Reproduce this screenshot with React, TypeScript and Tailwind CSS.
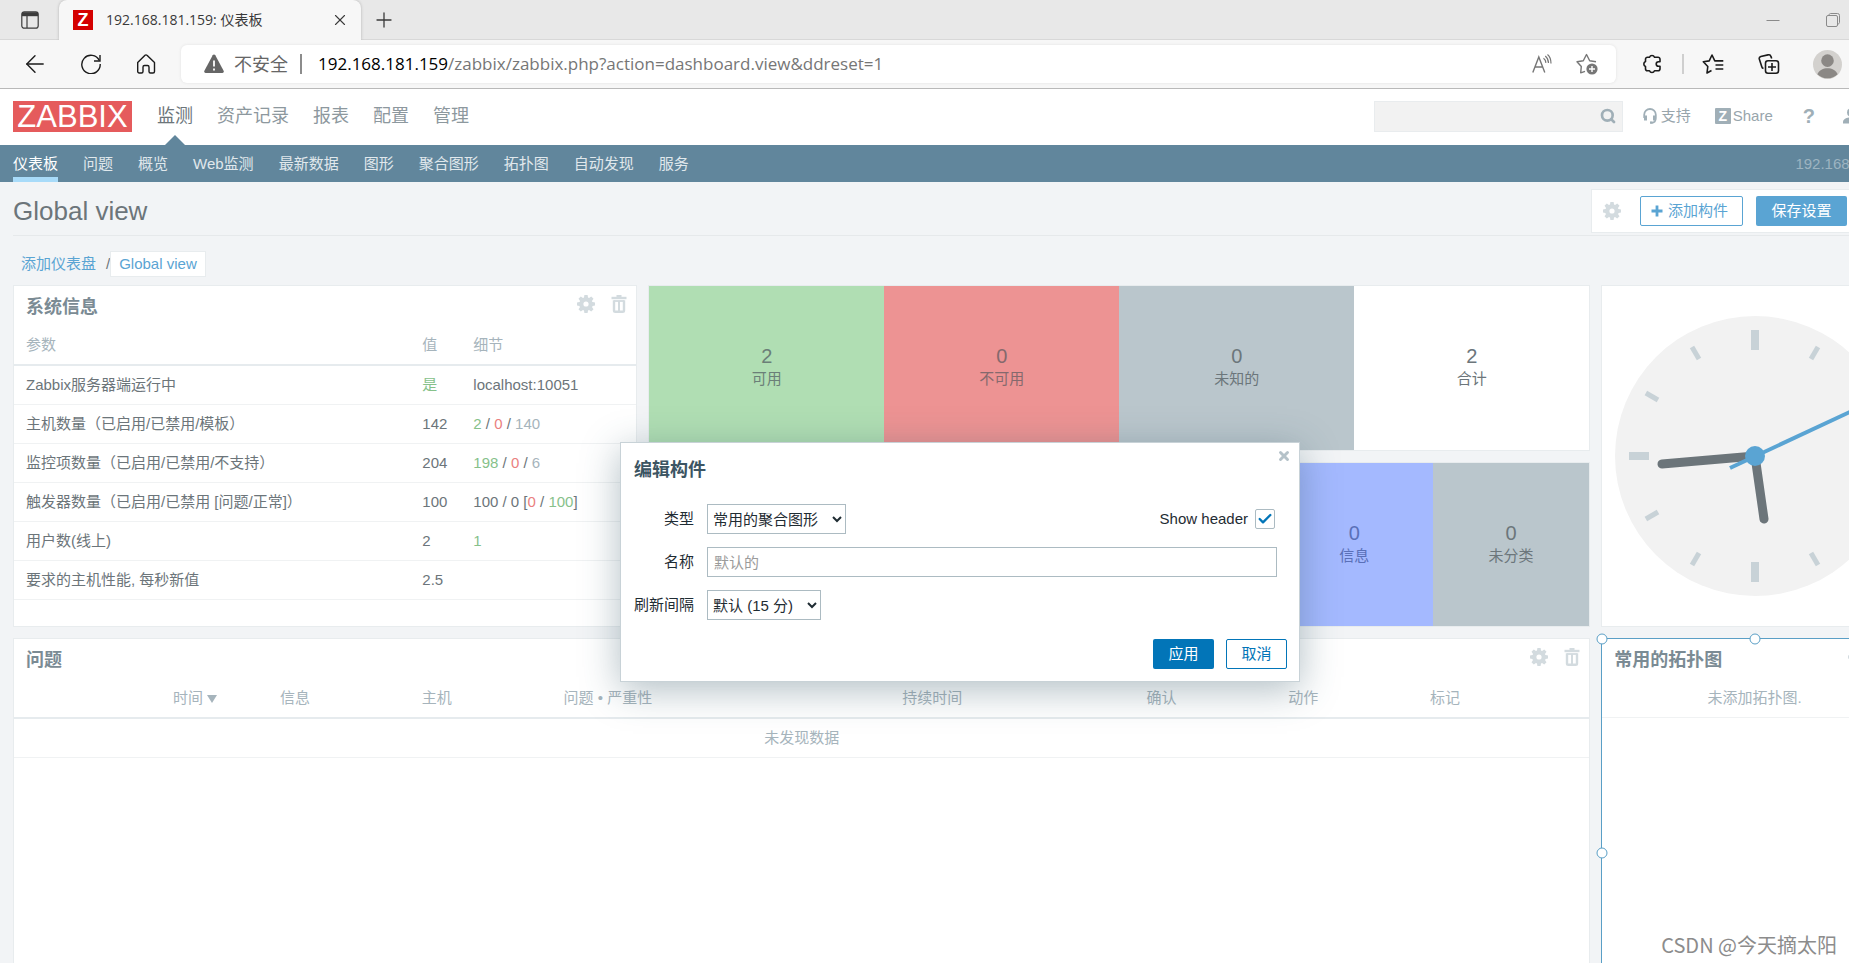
import type { ReactNode } from "react"
import { ArrowLeft, Check, Plus, Search, X } from "lucide-react"

const mainMenu = ["监测", "资产记录", "报表", "配置", "管理"]
const subMenu = ["仪表板", "问题", "概览", "Web监测", "最新数据", "图形", "聚合图形", "拓扑图", "自动发现", "服务"]

const green = "text-[#86c18a]"
const red = "text-[#ea7f80]"
const gray = "text-[#a6b4bc]"

const systemInfo: { name: string; value: string; valueClass?: string; details: ReactNode }[] = [
  { name: "Zabbix服务器端运行中", value: "是", valueClass: green, details: "localhost:10051" },
  {
    name: "主机数量（已启用/已禁用/模板）",
    value: "142",
    details: (
      <>
        <span className={green}>2</span> / <span className={red}>0</span> / <span className={gray}>140</span>
      </>
    ),
  },
  {
    name: "监控项数量（已启用/已禁用/不支持）",
    value: "204",
    details: (
      <>
        <span className={green}>198</span> / <span className={red}>0</span> / <span className={gray}>6</span>
      </>
    ),
  },
  {
    name: "触发器数量（已启用/已禁用 [问题/正常]）",
    value: "100",
    details: (
      <>
        100 / 0 [<span className={red}>0</span> / <span className={green}>100</span>]
      </>
    ),
  },
  { name: "用户数(线上)", value: "2", details: <span className={green}>1</span> },
  { name: "要求的主机性能, 每秒新值", value: "2.5", details: "" },
]

const hostTiles = [
  { count: 2, label: "可用", className: "bg-[#b0deb3] text-[#6b7f78]" },
  { count: 0, label: "不可用", className: "bg-[#ed9393] text-[#85696d]" },
  { count: 0, label: "未知的", className: "bg-[#bac6cc] text-[#6c767b]" },
  { count: 2, label: "合计", className: "bg-white text-[#6c767b]" },
]

const severityTiles = [
  { count: 0, label: "信息", className: "col-start-5 bg-[#a4b9ff] text-[#5a70b8]" },
  { count: 0, label: "未分类", className: "bg-[#bac6cc] text-[#6c767b]" },
]

function GearIcon() {
  return (
    <svg viewBox="-9 -9 18 18" className="size-[18px]" fill="#d3dbdf">
      <circle r="4.7" fill="none" stroke="#d3dbdf" strokeWidth="4.2" />
      {[0, 45, 90, 135, 180, 225, 270, 315].map((a) => (
        <path key={a} d="M-2.2-5.5-1.6-9H1.6L2.2-5.5Z" transform={`rotate(${a})`} />
      ))}
    </svg>
  )
}

function TrashIcon() {
  return (
    <svg viewBox="0 0 16 18" className="h-[18px] w-4" fill="none" stroke="#d3dbdf">
      <path d="M.5 3h15" strokeWidth="2.4" />
      <path d="M5.5 1h5" strokeWidth="2" />
      <path d="M3 5.2v10.3a1.3 1.3 0 0 0 1.3 1.3h7.4a1.3 1.3 0 0 0 1.3-1.3V5.2" strokeWidth="2.4" />
      <path d="M3 6h10" strokeWidth="1.8" />
      <path d="M8 6v11" strokeWidth="2" />
    </svg>
  )
}

function Widget({ title, children }: { title: string; children: ReactNode }) {
  return (
    <>
      <div className="flex h-[39px] items-center pt-[2px] pr-[9px] pl-3">
        <h4 className="text-lg font-bold text-[#7b8b94]">{title}</h4>
        <div className="ml-auto flex items-center gap-4 pb-[6px]">
          <button aria-label="编辑">
            <GearIcon />
          </button>
          <button aria-label="删除">
            <TrashIcon />
          </button>
        </div>
      </div>
      {children}
    </>
  )
}

function Tile({ count, label, className }: { count: number; label: string; className: string }) {
  return (
    <div className={`flex flex-col items-center justify-center pb-[2px] ${className}`}>
      <span className="text-xl leading-6">{count}</span>
      <span className="leading-[22px]">{label}</span>
    </div>
  )
}

function Clock() {
  return (
    <svg viewBox="-140 -140 280 280" className="size-[280px]">
      <circle r="140" fill="#f2f2f2" />
      {Array.from({ length: 12 }, (_, i) =>
        i % 3 === 0 ? (
          <rect key={i} x="-4" y="-126" width="8" height="20" fill="#c8d2d7" transform={`rotate(${i * 30})`} />
        ) : (
          <rect key={i} x="-2.5" y="-126" width="5" height="14" fill="#c8d2d7" transform={`rotate(${i * 30})`} />
        ),
      )}
      <g stroke="#6c757a" strokeWidth="9" strokeLinecap="round">
        <path d="M0 0 9 63" />
        <path d="M0 0-93 8" />
      </g>
      <path d="M-25 12 112-52" stroke="#5aa4d3" strokeWidth="4" />
      <circle r="10" fill="#5aa4d3" />
    </svg>
  )
}

function BrowserChrome() {
  return (
    <header className="font-['Open_Sans','Noto_Sans_CJK_SC',sans-serif]">
      {/* Tab strip */}
      <div className="flex h-10 items-center bg-[#e8e8e8] shadow-[inset_0_-1px_0_#d8d8d8]">
        <button aria-label="标签操作" className="ml-[21px]">
          <svg viewBox="0 0 18 18" className="size-[18px]" fill="none" stroke="#3c3c3c" strokeWidth="1.2">
            <rect x=".8" y=".8" width="16.4" height="16.4" rx="2.5" />
            <path d="M1 3.2h16" strokeWidth="4" />
            <path d="M6 5v12" />
          </svg>
        </button>
        <div className="ml-5 flex h-10 w-[302px] items-center rounded-t-lg bg-[#f7f7f7] pr-3 pl-[14px] shadow-[0_0_3px_#b0b0b0] [clip-path:inset(-3px_-3px_0_-3px)]">
          <span className="grid size-5 place-items-center bg-[#d40000] font-['Liberation_Sans'] text-lg leading-5 font-bold text-white">
            Z
          </span>
          <span className="ml-[13px] text-sm text-[#3a3a3a]">192.168.181.159: 仪表板</span>
          <button aria-label="关闭标签" className="ml-auto">
            <X className="size-[18px] text-[#3a3a3a]" strokeWidth={1.5} />
          </button>
        </div>
        <button aria-label="新建标签" className="ml-[11px]">
          <Plus className="size-6 text-[#3a3a3a]" strokeWidth={1.3} />
        </button>
        <div className="mr-[80px] ml-auto flex items-center gap-[46px]">
          <button aria-label="最小化">
            <svg viewBox="0 0 14 14" className="size-[14px]" stroke="#8a8a8a">
              <path d="M.5 7.5h13" />
            </svg>
          </button>
          <button aria-label="还原">
            <svg viewBox="0 0 14 14" className="size-[14px]" fill="none" stroke="#8a8a8a">
              <rect x=".5" y="2.5" width="11" height="11" rx="1.5" />
              <path d="M3 2.2c0-1 .6-1.7 1.6-1.7h6.9a2 2 0 0 1 2 2v6.9c0 1-.6 1.6-1.7 1.6" />
            </svg>
          </button>
        </div>
      </div>

      {/* Address bar */}
      <div className="flex h-[49px] items-center border-b border-[#b9b9b9] bg-[#f7f7f7] pl-[25px]">
        <div className="flex items-center gap-9">
          <button aria-label="后退">
            <ArrowLeft className="size-5 scale-140 text-[#1b1b1b]" strokeWidth={1.2} />
          </button>
          <button aria-label="刷新">
            <svg viewBox="0 0 20 20" className="size-5" fill="none" stroke="#1b1b1b" strokeWidth="1.4">
              <path d="M18.3 6.5A9.2 9.2 0 1 0 19.2 10" />
              <path d="M19 1v6h-6" />
            </svg>
          </button>
          <button aria-label="主页">
            <svg viewBox="0 0 20 20" className="size-5" fill="none" stroke="#1b1b1b" strokeWidth="1.4" strokeLinejoin="round">
              <path d="M.7 8.5 8 1.3a1.4 1.4 0 0 1 2 0l7.500 7.200V17.500a1.500 1.500 0 0 1-1.500 1.500h-2.500a1.500 1.500 0 0 1-1.500-1.500V13a1.500 1.500 0 0 0-1.500-1.500h-3A1.500 1.500 0 0 0 6 13v4.500A1.500 1.500 0 0 1 4.500 19H2.200a1.500 1.500 0 0 1-1.500-1.500Z" />
            </svg>
          </button>
        </div>
        <div className="ml-6 flex h-[38px] flex-1 items-center rounded-md bg-white pr-[18px] pl-[23px] shadow-[0_0_3px_#e0e0e0]">
          <svg viewBox="0 0 20 20" className="size-5">
            <path d="M8.7 1.3a1.5 1.5 0 0 1 2.6 0l8.3 15.5A1.5 1.5 0 0 1 18.3 19H1.7A1.5 1.5 0 0 1 .4 16.8Z" fill="#666" />
            <path d="M10 6.500v6M10 14.500v2" stroke="#fff" strokeWidth="1.800" />
          </svg>
          <span className="ml-[10px] text-lg text-[#666]">不安全</span>
          <span className="ml-3 h-5 w-[2px] bg-[#8c8c8c]" />
          <span className="ml-4 text-[17px] text-[#767676]">
            <span className="text-black">192.168.181.159</span>/zabbix/zabbix.php?action=dashboard.view&amp;ddreset=1
          </span>
          <button aria-label="朗读" className="ml-auto">
            <svg viewBox="0 0 20 20" className="size-5" fill="none" stroke="#767676" strokeWidth="1.4">
              <path d="M.8 18.500 6.800 3l6 15.500M3 13h7.700" />
              <path d="M11.500 4.300c1.500 1 2.300 2.700 2.400 4.600M13.300 2c2 1.600 3 4 3.200 7M15.500.5c2.400 2 3.500 5 3.500 9" strokeWidth="1.200" />
            </svg>
          </button>
          <button aria-label="收藏此页" className="ml-6">
            <svg viewBox="0 0 22 22" className="size-[22px]" fill="none" stroke="#767676" strokeWidth="1.4" strokeLinejoin="round">
              <path d="M9 18.300 4.700 19.800 5.300 13.500 1 8.700l6.300-1L10.500 1.500l3.200 6.200 6.300 1" />
              <circle cx="16" cy="16" r="5.600" fill="#767676" stroke="none" />
              <path d="M16 13v6M13 16h6" stroke="#fff" />
            </svg>
          </button>
        </div>
        <div className="flex items-center pr-[78px] text-[#1b1b1b]">
          <button aria-label="扩展" className="ml-[26px]">
            <svg viewBox="0 0 20 20" className="size-5" fill="none" stroke="currentColor" strokeWidth="1.6" strokeLinejoin="round">
              <path d="M5.500 3.200H7.500a2.700 2.700 0 0 1 5 0h3.500a2 2 0 0 1 2 2v2.500h-1.500a2.300 2.300 0 0 0 0 4.600h1.500v2.500a2 2 0 0 1-2 2h-3.500a2.700 2.700 0 0 1-5 0h-2a2 2 0 0 1-2-2v-2.300a2.700 2.700 0 0 1 0-5V5.200a2 2 0 0 1 2-2Z" />
            </svg>
          </button>
          <span className="ml-5 h-5 w-[2px] bg-[#cfcfcf]" />
          <button aria-label="收藏夹" className="ml-[18px]">
            <svg viewBox="0 0 22 20" className="h-5 w-[22px]" fill="none" stroke="currentColor" strokeWidth="1.6" strokeLinejoin="round">
              <path d="M9.500 16.500 5 19l.8-6.500L1.300 7.800l5.900-.9L10 1l2.800 5.900h8.500M13.500 11h7.800M13.500 15h7.800" />
            </svg>
          </button>
          <button aria-label="集锦" className="ml-[34px]">
            <svg viewBox="0 0 22 20" className="h-5 w-[22px]" fill="none" stroke="currentColor" strokeWidth="1.6">
              <path d="M5.500 14.500c-1-.3-1.600-1-1.800-2L1.300 5c-.3-1.300.3-2.200 1.500-2.600L10 .9c1.400-.3 2.500.2 2.900 1.500l.8 2.100" />
              <rect x="7.500" y="6.700" width="13" height="12.500" rx="2.500" />
              <path d="M14 9v8M10 13h8" />
            </svg>
          </button>
          <button aria-label="个人资料" className="ml-[33px]">
            <svg viewBox="0 0 30 30" className="size-[29px]">
              <circle cx="15" cy="15" r="15" fill="#d3d1ce" />
              <circle cx="15" cy="11" r="6.500" fill="#8b8885" />
              <path d="M4.500 25c2-4 6-6 10.500-6s8.500 2 10.500 6a15 15 0 0 1-21 0Z" fill="#8b8885" />
            </svg>
          </button>
        </div>
      </div>
    </header>
  )
}

function ZabbixHeader() {
  return (
    <div>
      <div className="flex h-14 items-center bg-white pl-[13px]">
        <a href="#" className="mb-[2px] flex h-[31px] w-[119px] items-center justify-center bg-[#e55b5c] text-[31px] leading-[31px] text-white">
          ZABBIX
        </a>
        <nav className="ml-[25px] flex h-full gap-6 text-lg text-[#8d989e]">
          {mainMenu.map((item, i) => (
            <a
              key={item}
              href="#"
              className={`relative flex items-center pb-[2px] ${i === 0 ? "text-[#6c757a]" : ""}`}
            >
              {item}
              {i === 0 && (
                <svg viewBox="0 0 20 10" className="absolute bottom-0 left-1/2 h-[10px] w-5 -translate-x-1/2" fill="#61869c">
                  <path d="M0 10 10 0l10 10Z" />
                </svg>
              )}
            </a>
          ))}
        </nav>
        <div className="mr-[61px] mb-[2px] ml-auto flex items-center text-[#98a5ac]">
          <div className="flex h-[31px] w-[249px] items-center border border-[#e9ecee] bg-[#f2f2f2] pr-[6px]">
            <input type="text" aria-label="搜索" className="min-w-0 flex-1 px-1 outline-none" />
            <button aria-label="搜索">
              <Search className="size-4 text-[#a0afb7]" strokeWidth={4} />
            </button>
          </div>
          <a href="#" className="ml-5 flex items-center gap-1">
            <svg viewBox="0 0 14 16" className="h-4 w-[14px]" fill="none" stroke="#a0afb7">
              <path d="M1.200 10V6.800a5.800 5.800 0 0 1 11.600 0V10c0 3-1.500 4.800-4.300 4.800" strokeWidth="1.800" />
              <path d="M2.500 7.500v5M11.500 7.500v5" strokeWidth="3" />
              <path d="M7 14.600h2.500" strokeWidth="2.400" />
            </svg>
            支持
          </a>
          <a href="#" className="ml-6 flex items-center gap-[2px]">
            <span className="grid size-4 place-items-center rounded-[1px] bg-[#a0afb7] text-sm leading-4 font-bold text-white">Z</span>
            Share
          </a>
          <a href="#" className="ml-[30px] text-xl leading-5 font-bold text-[#a0afb7]">
            ?
          </a>
          <a href="#" aria-label="用户" className="ml-7">
            <svg viewBox="0 0 16 16" className="size-4" fill="#a0afb7">
              <circle cx="8" cy="4.500" r="4" />
              <path d="M0 15.500v-1.500C0 11 3.500 9.300 8 9.300s8 1.700 8 4.700v1.500Z" />
            </svg>
          </a>
        </div>
      </div>
      <div className="flex h-[37px] items-center bg-[#61869c] pr-3 pl-[13px] text-[#e0e8ec]">
        <nav className="flex h-full gap-[25px]">
          {subMenu.map((item, i) => (
            <a
              key={item}
              href="#"
              className={`flex items-center border-y-[5px] border-t-transparent ${
                i === 0 ? "border-b-[#a8dbf9] text-white" : "border-b-transparent"
              }`}
            >
              {item}
            </a>
          ))}
        </nav>
        <span className="ml-auto text-[#9db4c1]">192.168.181.159</span>
      </div>
    </div>
  )
}

function EditDialog() {
  const control = "h-[30px] border border-[#acbbc2] bg-white text-[#1f2c33]"
  return (
    <div
      role="dialog"
      aria-labelledby="dialog-title"
      className="absolute top-[442px] left-1/2 w-[680px] -translate-x-1/2 border border-[#c8d2d7] bg-white text-[#1f2c33] shadow-[0_8px_36px_rgba(50,85,100,0.38)]"
    >
      <div className="flex h-[54px] items-center pr-2 pl-[13px]">
        <h4 id="dialog-title" className="text-lg font-bold text-[#3c5563]">
          编辑构件
        </h4>
        <button aria-label="关闭" className="ml-auto self-start pt-[6px]">
          <X className="size-[14px] text-[#b5c2c9]" strokeWidth={5} />
        </button>
      </div>
      <form className="grid grid-cols-[60px_1fr] items-center gap-x-[13px] gap-y-[13px] pt-[7px] pr-[22px] pl-[13px]">
        <label htmlFor="type" className="text-right">
          类型
        </label>
        <div className="flex items-center">
          <select id="type" className={`w-[139px] pl-[1px] ${control}`}>
            <option>常用的聚合图形</option>
          </select>
          <label htmlFor="show-header" className="ml-auto">
            Show header
          </label>
          <span className="mr-[2px] ml-[7px] grid size-5 place-items-center">
            <input
              id="show-header"
              type="checkbox"
              defaultChecked
              className="col-start-1 row-start-1 size-5 appearance-none rounded-xs border border-[#acbbc2] bg-white"
            />
            <Check className="pointer-events-none col-start-1 row-start-1 size-4 text-[#0275b8]" strokeWidth={3.5} />
          </span>
        </div>
        <label htmlFor="name" className="text-right">
          名称
        </label>
        <input id="name" type="text" placeholder="默认的" className={`w-full px-[6px] placeholder:text-[#9b9b9b] ${control}`} />
        <label htmlFor="interval" className="text-right">
          刷新间隔
        </label>
        <div>
          <select id="interval" className={`block w-[114px] pl-[1px] ${control}`}>
            <option>默认 (15 分)</option>
          </select>
        </div>
      </form>
      <div className="flex justify-end gap-3 pt-[19px] pr-3 pb-3">
        <button className="h-[30px] w-[61px] rounded-xs bg-[#0275b8] text-white">应用</button>
        <button className="h-[30px] w-[61px] rounded-xs border border-[#0275b8] bg-white text-[#0275b8]">取消</button>
      </div>
    </div>
  )
}

export default function App() {
  const panel = "border border-[#e8ecee] bg-white"
  const handle = "absolute size-[11px] -translate-1/2 rounded-full border border-[#5a9fc6] bg-white"

  return (
    <div className="relative h-screen overflow-hidden bg-[#f2f4f6] font-['Liberation_Sans','Noto_Sans_CJK_SC',sans-serif] text-[15px] leading-5 text-[#6c757a]">
      <div className="relative -mr-[71px]">
        <BrowserChrome />
        <ZabbixHeader />

        <main className="pr-3 pl-[13px]">
          <div className="flex h-[54px] items-end border-b border-[#e6e9eb] pb-[2px]">
            <h1 className="self-center pt-[6px] text-[26px] leading-8">Global view</h1>
            <div className="ml-auto flex h-11 w-[317px] items-center border border-[#e8ecee] bg-white pl-[11px]">
              <button aria-label="设置">
                <GearIcon />
              </button>
              <button className="ml-[19px] flex h-[30px] w-[103px] items-center justify-center gap-[5px] rounded-xs border border-[#5aa4d3] pr-1 text-[#5aa4d3]">
                <svg viewBox="0 0 12 12" className="size-3" stroke="currentColor" strokeWidth="2.8">
                  <path d="M6 .5v11M.5 6h11" />
                </svg>
                添加构件
              </button>
              <button className="ml-[13px] h-[30px] w-[91px] rounded-xs bg-[#5aa4d3] text-white">保存设置</button>
            </div>
          </div>

          <nav className="flex h-[49px] items-center pt-[7px] pl-2 text-[#5aa4d3]">
            <a href="#">添加仪表盘</a>
            <span className="pl-[10px] text-[#6c757a]">/</span>
            <a href="#" className="border border-[#e8ecee] bg-white px-2 py-[2px]">
              Global view
            </a>
          </nav>

          <div className="grid grid-cols-12 grid-rows-[166px_165px_430px] gap-[11px]">
            <section className={`col-span-4 row-span-2 ${panel}`}>
              <Widget title="系统信息">
                <table className="w-full table-fixed text-left">
                  <thead>
                    <tr className="h-10 border-b-2 border-[#e6ebee] text-[#a6b4bc]">
                      <th className="pl-3 font-normal">参数</th>
                      <th className="w-[51px] font-normal">值</th>
                      <th className="w-[163px] font-normal">细节</th>
                    </tr>
                  </thead>
                  <tbody>
                    {systemInfo.map((row) => (
                      <tr key={row.name} className="h-[39px] border-b border-[#f0f2f3]">
                        <td className="pl-3">{row.name}</td>
                        <td className={row.valueClass}>{row.value}</td>
                        <td>{row.details}</td>
                      </tr>
                    ))}
                  </tbody>
                </table>
              </Widget>
            </section>

            <section className={`col-span-6 grid grid-cols-4 ${panel}`}>
              {hostTiles.map((tile) => (
                <Tile key={tile.label} {...tile} />
              ))}
            </section>

            <section className={`col-span-2 row-span-2 flex items-center justify-center ${panel}`}>
              <Clock />
            </section>

            <section className={`col-span-6 grid grid-cols-6 ${panel}`}>
              {severityTiles.map((tile) => (
                <Tile key={tile.label} {...tile} />
              ))}
            </section>

            <section className={`col-span-10 ${panel}`}>
              <Widget title="问题">
                <table className="w-full table-fixed text-left text-[#a6b4bc]">
                  <thead>
                    <tr className="h-10 border-b-2 border-[#e6ebee]">
                      <th className="w-[16%] pr-[49px] text-right font-normal">
                        时间 <span className="inline-block border-x-[5px] border-t-8 border-x-transparent border-t-[#a6b4bc]" />
                      </th>
                      <th className="w-[9%] pl-[14px] font-normal">信息</th>
                      <th className="w-[9%] pl-[14px] font-normal">主机</th>
                      <th className="w-[21.5%] pl-[14px] font-normal">问题 • 严重性</th>
                      <th className="w-[15.5%] pl-[14px] font-normal">持续时间</th>
                      <th className="w-[9%] pl-[14px] font-normal">确认</th>
                      <th className="w-[9%] pl-[14px] font-normal">动作</th>
                      <th className="pl-[14px] font-normal">标记</th>
                    </tr>
                  </thead>
                  <tbody>
                    <tr className="h-[39px] border-b border-[#f0f2f3] text-center">
                      <td colSpan={8}>未发现数据</td>
                    </tr>
                  </tbody>
                </table>
              </Widget>
            </section>

            <section className="relative col-span-2 border border-[#5a9fc6] bg-white">
              <Widget title="常用的拓扑图">
                <p className="flex h-10 items-center justify-center border-b border-[#f0f2f3] text-[#a6b4bc]">未添加拓扑图.</p>
              </Widget>
              <span className={`top-0 left-0 ${handle}`} />
              <span className={`top-0 left-1/2 ${handle}`} />
              <span className={`top-1/2 left-0 ${handle}`} />
            </section>
          </div>
        </main>

        <EditDialog />
      </div>

      <p className="absolute right-3 bottom-1 font-['Noto_Sans_CJK_SC',sans-serif] text-xl text-[#8c8c8c]">CSDN @今天摘太阳</p>
    </div>
  )
}
